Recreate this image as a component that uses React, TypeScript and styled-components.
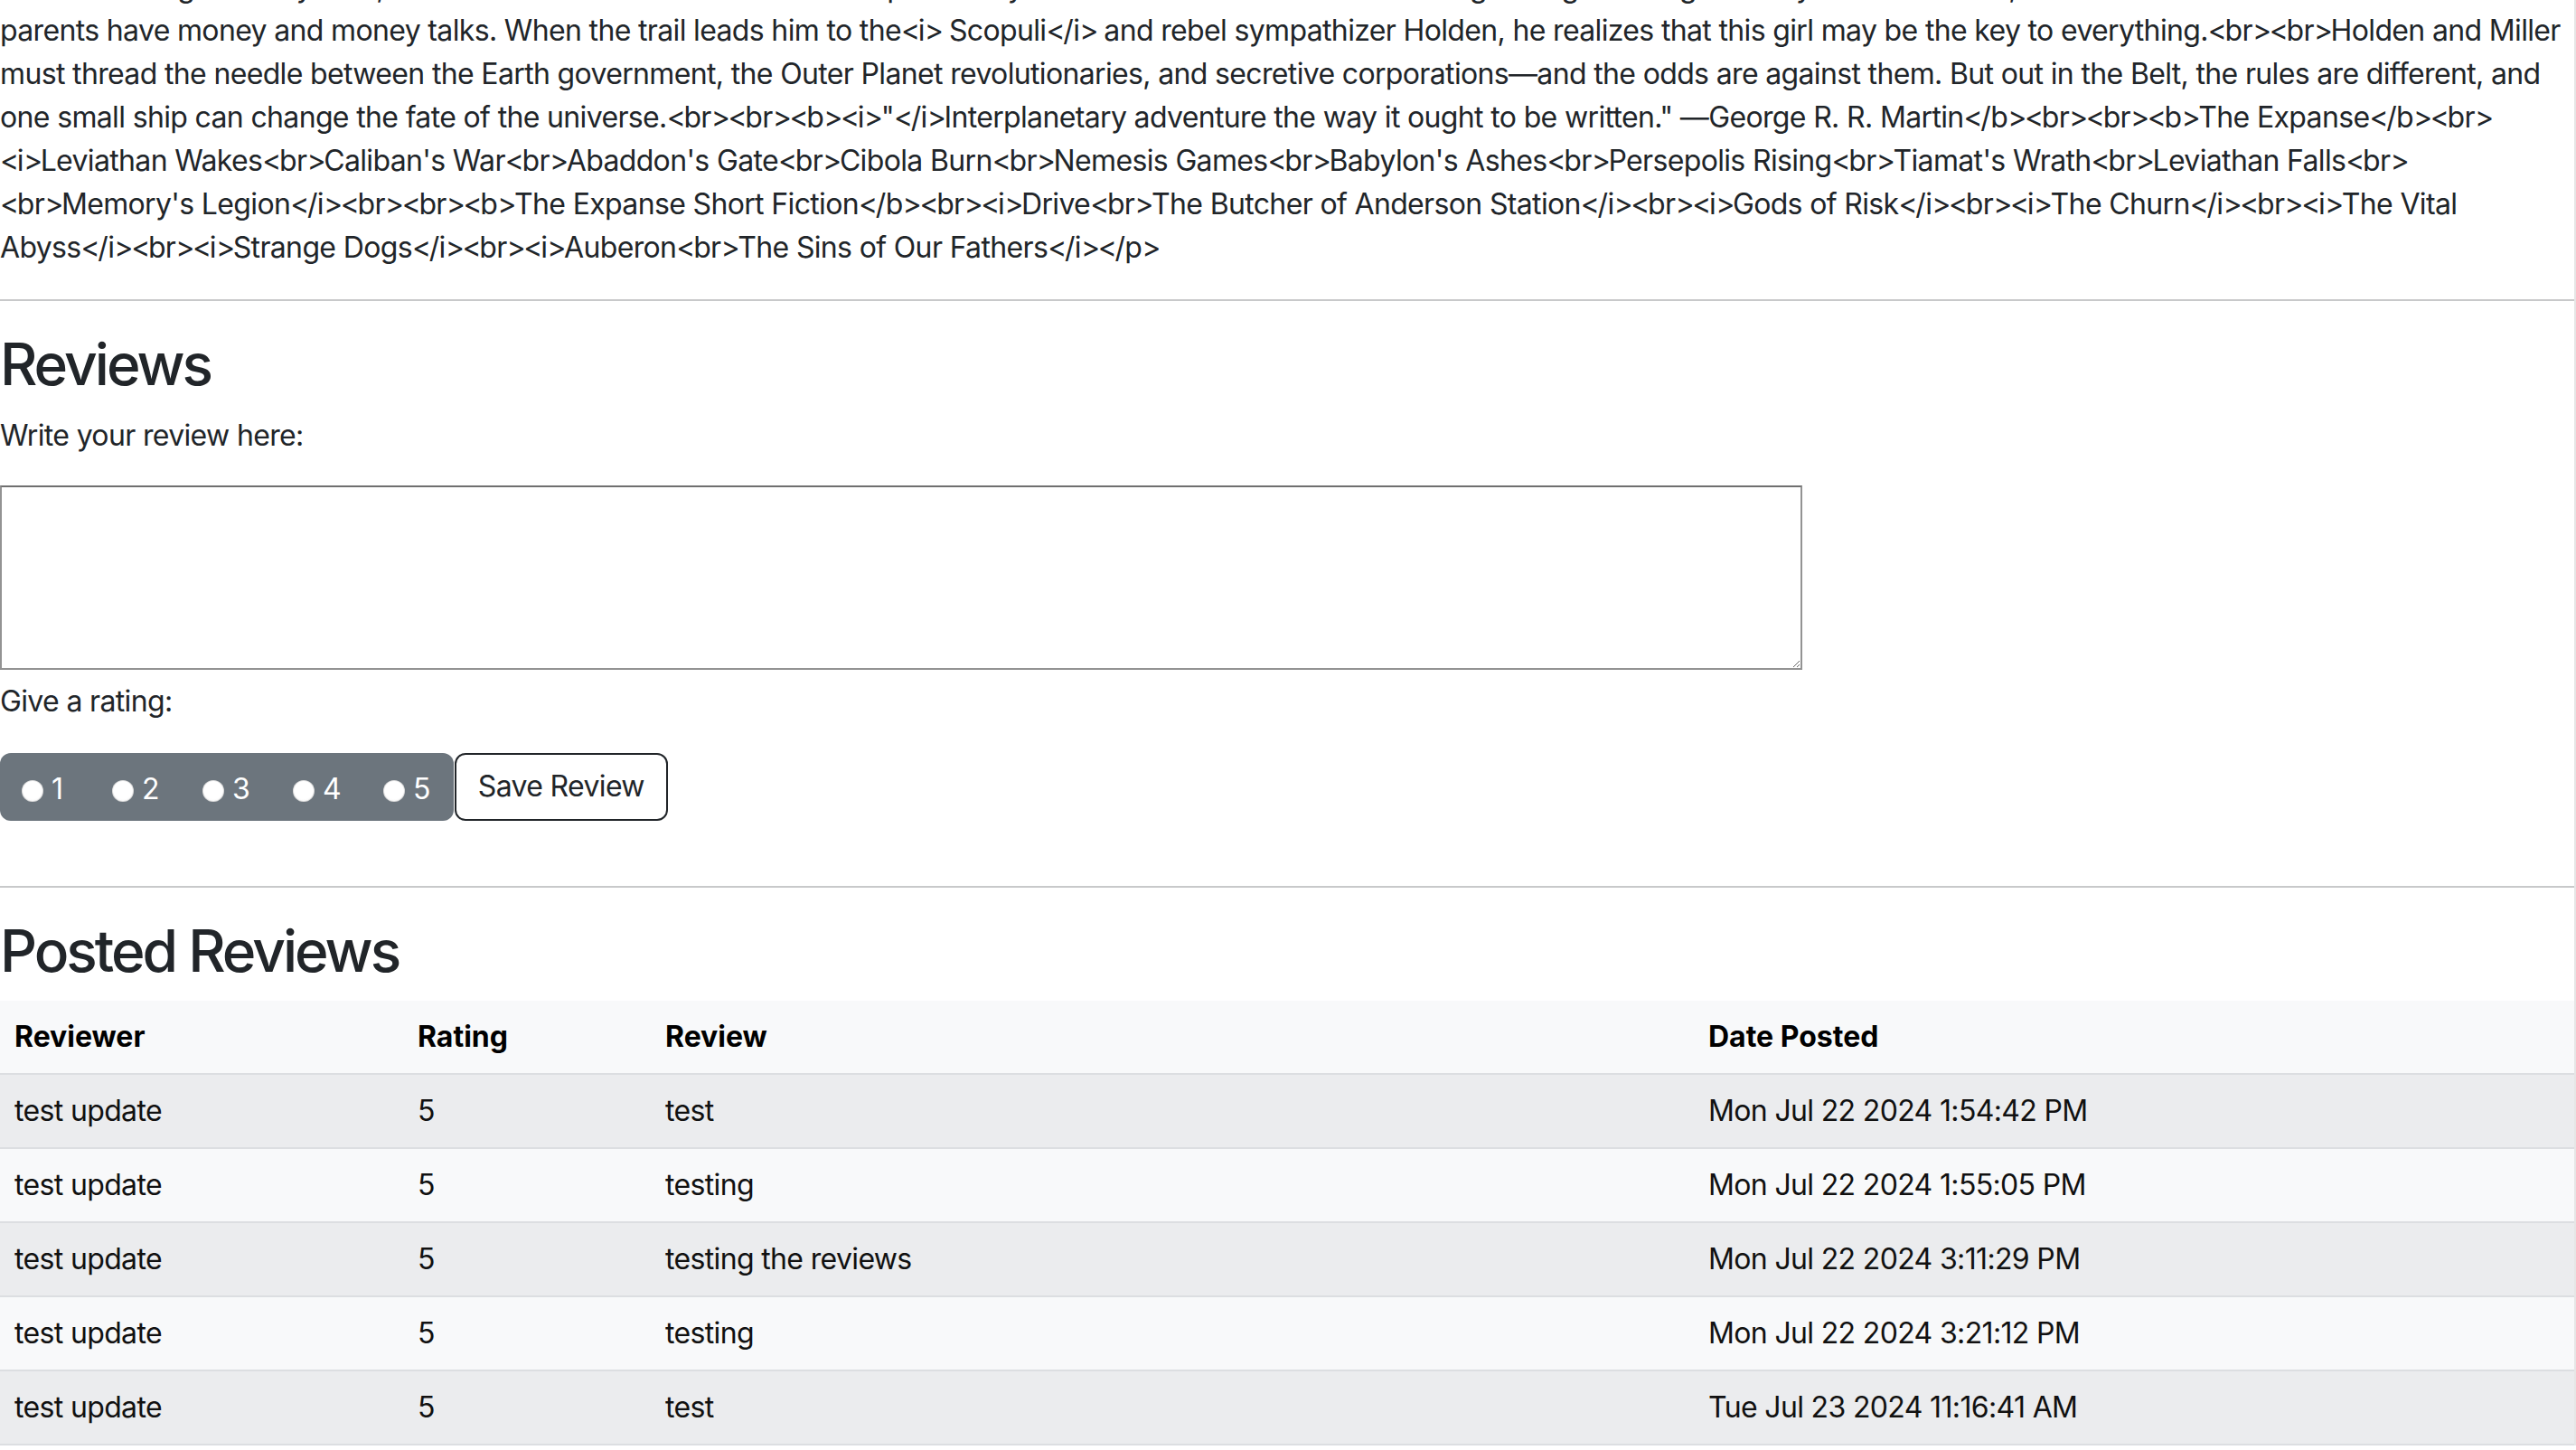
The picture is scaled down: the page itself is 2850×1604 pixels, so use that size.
import React from "react";
import styled, { createGlobalStyle } from "styled-components";

const GlobalStyle = createGlobalStyle`
  html, body {
    margin: 0;
    padding: 0;
    background: #ffffff;
    overflow: hidden;
  }
  body {
    font-family: Inter, "Noto Sans", "Liberation Sans", sans-serif;
    color: #212529;
    font-size: 32px;
    line-height: 48px;
    letter-spacing: -0.65px;
  }
  *, *::before, *::after { box-sizing: border-box; }
`;

const Page = styled.div`
  width: 2850px;
  border-right: 2px solid #e6e6e6;
  min-height: 1604px;
`;

const Description = styled.p`
  margin: -38px 0 33px;
  white-space: nowrap;
  font-size: 32px;
  line-height: 48px;
`;

const Bracket = styled.span`
  letter-spacing: -2.4px;
`;

const Rule = styled.hr<{ $top?: number }>`
  margin: ${(p) => p.$top ?? 32}px 0 32px;
  border: 0;
  border-top: 2px solid #c8c9ca;
  height: 0;
`;

const Heading = styled.h2`
  margin: 0 0 16px;
  font-size: 64px;
  line-height: 1.2;
  font-weight: 500;
  letter-spacing: -3px;
  color: #212529;
`;

const FieldLabel = styled.label<{ $top?: number }>`
  display: block;
  margin-top: ${(p) => p.$top ?? 0}px;
  font-size: 32px;
  line-height: 48px;
`;

const ReviewBox = styled.textarea`
  display: block;
  margin-top: 31px;
  width: 1994px;
  height: 204px;
  border-style: solid;
  border-width: 2px;
  border-color: #6f6f6f #939393 #939393 #939393;
  border-radius: 0;
  padding: 4px;
  font-family: inherit;
  font-size: 26px;
  background: #fff;
`;

const RatingRow = styled.div`
  display: flex;
  align-items: stretch;
  gap: 1px;
  margin-top: 33px;
  height: 75px;
`;

const RadioGroup = styled.div`
  display: flex;
  align-items: center;
  background: #6c757d;
  border-radius: 12px;
  padding: 6px 26px 0 24px;
`;

const RadioItem = styled.label<{ $last?: boolean }>`
  display: flex;
  align-items: center;
  gap: 9px;
  width: ${(p) => (p.$last ? "auto" : "100px")};
  color: #ffffff;
  font-size: 32px;
  line-height: 48px;
`;

const RadioDot = styled.input`
  appearance: none;
  -webkit-appearance: none;
  margin: 3px 0 0;
  width: 24px;
  height: 24px;
  border-radius: 50%;
  background: radial-gradient(circle at 50% 45%, #ffffff 55%, #ececec 100%);
  box-shadow: inset 0 0 0 1px rgba(0, 0, 0, 0.12);
`;

const SaveButton = styled.button`
  height: 75px;
  padding: 0 24px;
  border: 2px solid #212529;
  border-radius: 12px;
  background: #ffffff;
  color: #212529;
  font-family: inherit;
  font-size: 32px;
  line-height: 48px;
  letter-spacing: -0.65px;
`;

const ReviewTable = styled.table`
  width: 2848px;
  table-layout: fixed;
  border-collapse: collapse;
  font-size: 32px;
  line-height: 48px;
`;

const HeadCell = styled.th`
  text-align: left;
  font-weight: 700;
  letter-spacing: 0;
  color: #000000;
  background: #f8f9fa;
  padding: 16px;
  border-bottom: 2px solid #dcdee1;
`;

const Row = styled.tr<{ $striped: boolean }>`
  background: ${(p) => (p.$striped ? "#ebecee" : "#f8f9fa")};
`;

const Cell = styled.td`
  padding: 16px;
  color: #111111;
  border-bottom: 2px solid #dcdee1;
  white-space: nowrap;
`;

const lines = [
  "War is brewing in the system, unless he can find out who left the ship and why.<br><br>Detective Miller is looking for a girl. One girl in a system of billions, but her",
  "parents have money and money talks. When the trail leads him to the<i> Scopuli</i> and rebel sympathizer Holden, he realizes that this girl may be the key to everything.<br><br>Holden and Miller",
  "must thread the needle between the Earth government, the Outer Planet revolutionaries, and secretive corporations\u2014and the odds are against them. But out in the Belt, the rules are different, and",
  "one small ship can change the fate of the universe.<br><br><b><i>\"</i>Interplanetary adventure the way it ought to be written.\" \u2014George R. R. Martin</b><br><br><b>The Expanse</b><br>",
  "<i>Leviathan Wakes<br>Caliban's War<br>Abaddon's Gate<br>Cibola Burn<br>Nemesis Games<br>Babylon's Ashes<br>Persepolis Rising<br>Tiamat's Wrath<br>Leviathan Falls<br>",
  "<br>Memory's Legion</i><br><br><b>The Expanse Short Fiction</b><br><i>Drive<br>The Butcher of Anderson Station</i><br><i>Gods of Risk</i><br><i>The Churn</i><br><i>The Vital",
  "Abyss</i><br><i>Strange Dogs</i><br><i>Auberon<br>The Sins of Our Fathers</i></p>",
];

const reviews = [
  { reviewer: "test update", rating: 5, review: "test", date: "Mon Jul 22 2024 1:54:42 PM" },
  { reviewer: "test update", rating: 5, review: "testing", date: "Mon Jul 22 2024 1:55:05 PM" },
  { reviewer: "test update", rating: 5, review: "testing the reviews", date: "Mon Jul 22 2024 3:11:29 PM" },
  { reviewer: "test update", rating: 5, review: "testing", date: "Mon Jul 22 2024 3:21:12 PM" },
  { reviewer: "test update", rating: 5, review: "test", date: "Tue Jul 23 2024 11:16:41 AM" },
];

function RawLine({ text }: { text: string }) {
  const parts = text.split(/([<>])/);
  return (
    <>
      {parts.map((part, i) =>
        part === "<" || part === ">" ? <Bracket key={i}>{part}</Bracket> : part
      )}
    </>
  );
}

export default function App() {
  return (
    <>
      <GlobalStyle />
      <Page>
        <Description>
          {lines.map((l, i) => (
            <React.Fragment key={i}>
              <RawLine text={l} />
              {i < lines.length - 1 && <br />}
            </React.Fragment>
          ))}
        </Description>
        <Rule />
        <section>
          <Heading>Reviews</Heading>
          <FieldLabel htmlFor="review-text">Write your review here:</FieldLabel>
          <ReviewBox id="review-text" />
          <FieldLabel $top={11}>Give a rating:</FieldLabel>
          <RatingRow>
            <RadioGroup>
              {[1, 2, 3, 4, 5].map((n) => (
                <RadioItem key={n} $last={n === 5}>
                  <RadioDot type="radio" name="rating" value={n} />
                  {n}
                </RadioItem>
              ))}
            </RadioGroup>
            <SaveButton type="button">Save Review</SaveButton>
          </RatingRow>
        </section>
        <Rule $top={72} />
        <section>
          <Heading>Posted Reviews</Heading>
          <ReviewTable>
            <colgroup>
              <col style={{ width: 446 }} />
              <col style={{ width: 274 }} />
              <col style={{ width: 1154 }} />
              <col />
            </colgroup>
            <thead>
              <tr>
                <HeadCell>Reviewer</HeadCell>
                <HeadCell>Rating</HeadCell>
                <HeadCell>Review</HeadCell>
                <HeadCell>Date Posted</HeadCell>
              </tr>
            </thead>
            <tbody>
              {reviews.map((r, i) => (
                <Row key={i} $striped={i % 2 === 0}>
                  <Cell>{r.reviewer}</Cell>
                  <Cell>{r.rating}</Cell>
                  <Cell>{r.review}</Cell>
                  <Cell>{r.date}</Cell>
                </Row>
              ))}
            </tbody>
          </ReviewTable>
        </section>
      </Page>
    </>
  );
}
